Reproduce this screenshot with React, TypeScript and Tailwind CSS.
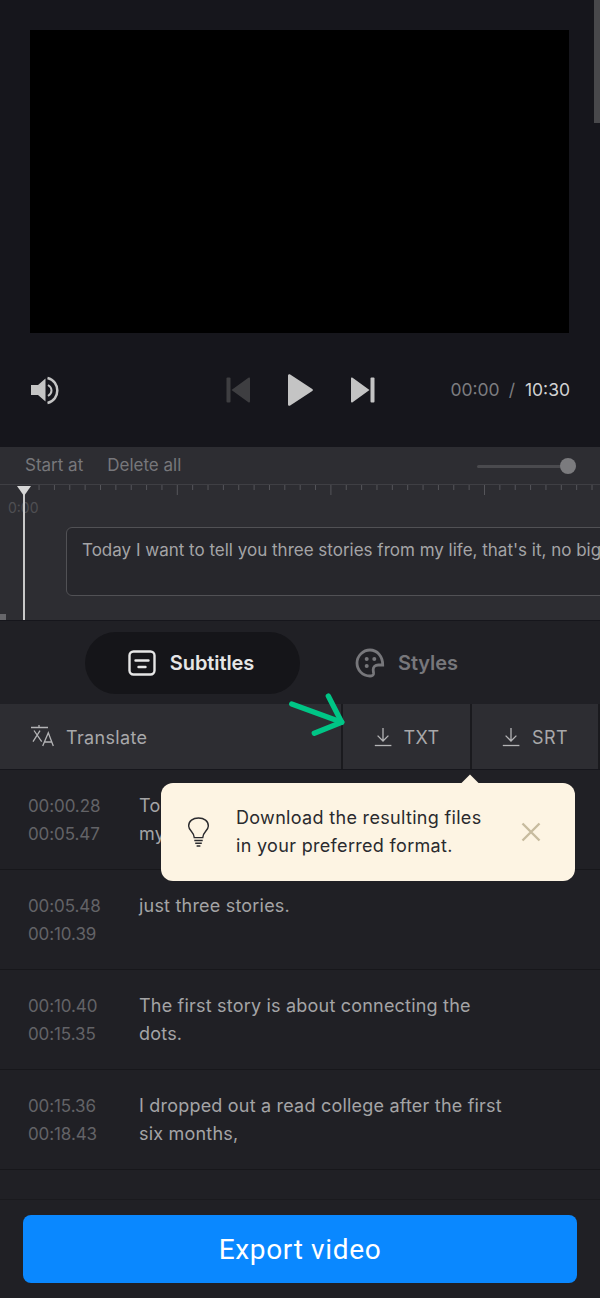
import React from 'react';

const rows = [
  { from: '00:00.28', to: '00:05.47', text: ['Today I want to tell you three stories from', 'my life, that\'s it, no big deal,'] },
  { from: '00:05.48', to: '00:10.39', text: ['just three stories.'] },
  { from: '00:10.40', to: '00:15.35', text: ['The first story is about connecting the', 'dots.'] },
  { from: '00:15.36', to: '00:18.43', text: ['I dropped out a read college after the first', 'six months,'] },
];

function Ruler() {
  const ticks = [];
  for (let i = 1; i < 38; i++) {
    const x = 23.7 + i * 15.36;
    ticks.push(<line key={i} x1={x} x2={x} y1={0} y2={i % 10 === 0 ? 10 : 5} stroke="#55555a" strokeWidth="1" />);
  }
  return (
    <svg width="600" height="12" className="block">
      {ticks}
    </svg>
  );
}

function DownloadIcon() {
  return (
    <svg width="18" height="20" viewBox="0 0 18 20" fill="none" stroke="#b4b4b6" strokeWidth="1.3">
      <path d="M9 1v12.5M3.6 8.6 9 14l5.4-5.4" />
      <path d="M.8 18.5h16.6" />
    </svg>
  );
}

export default function App() {
  return (
    <div className="relative w-[600px] h-[1298px] overflow-hidden bg-[#202025] font-['Inter',sans-serif]">
      {/* scrollbar */}
      <div className="absolute right-0 top-0 w-[6px] h-[123px] bg-[#48484b]" />

      {/* player */}
      <div className="h-[447px] bg-[#16161c] px-[30px] pt-[30px]">
        <div className="w-[539px] h-[303px] bg-black" />
        <div className="flex items-center h-[114px]">
          <svg width="30" height="30" viewBox="0 0 30 30">
            <path d="M1 10h7l7.500-6.500v23L8 20H1z" fill="#c4c4c4" />
            <path d="M18 10c2.500 1.500 3.500 3.500 3.500 5.500s-1 4-3.500 5.500" fill="none" stroke="#c4c4c4" strokeWidth="2" />
            <path d="M17.500 3C24 4.500 27.300 10 27.300 15.500S24 26.500 17.500 28" fill="none" stroke="#c4c4c4" strokeWidth="2.500" />
          </svg>
          <div className="flex items-center ml-[166px] gap-[38px]">
            <svg width="24" height="26" viewBox="0 0 24 26">
              <rect x="0.500" y="0.500" width="4" height="25" rx="1" fill="#3e3e41" />
              <path d="M24 1.500v23a1 1 0 0 1-1.600.8L5.500 13 22.400.7A1 1 0 0 1 24 1.500z" fill="#3e3e41" />
            </svg>
            <svg width="25" height="32" viewBox="0 0 25 32">
              <path d="M0 1.600v28.800c0 1.200 1.200 1.800 2.200 1.100L24.300 17c.8-.5.8-1.500 0-2L2.200.5C1.200-.2 0 .4 0 1.600z" fill="#c4c4c4" />
            </svg>
            <svg width="24" height="26" viewBox="0 0 24 26">
              <rect x="19.500" y="0.500" width="4" height="25" rx="1" fill="#c4c4c4" />
              <path d="M0 1.500v23a1 1 0 0 0 1.600.8L18.500 13 1.600.7A1 1 0 0 0 0 1.500z" fill="#c4c4c4" />
            </svg>
          </div>
          <div className="ml-auto flex items-center text-[17.500px] pt-[1px]">
            <span className="text-[#7d7d80]">00:00</span>
            <span className="text-[#7d7d80] ml-[9px] mr-[10px]">/</span>
            <span className="text-[#d2d2d3]">10:30</span>
          </div>
        </div>
      </div>

      {/* timeline */}
      <div className="relative h-[174px] bg-[#2d2d32] border-b border-[#16161c]">
        <div className="flex items-center h-[38px] pl-[25px] pr-[24px] pt-[1px] border-b border-[#3f3f44] text-[17px] text-[#77777b]">
          <span>Start at</span>
          <span className="ml-[24px]">Delete all</span>
          <div className="ml-auto relative flex items-center w-[99px]">
            <div className="w-full h-[3px] rounded-full bg-[#4a4a4e]" />
            <div className="absolute right-0 w-[16px] h-[16px] rounded-full bg-[#7b7b7e]" />
          </div>
        </div>
        <Ruler />
        <div className="pl-[8px] text-[14px] leading-[20px] text-[#4f4f53] mt-[1px]">0:00</div>
        <div className="ml-[66px] mt-[9px] h-[69px] w-[600px] rounded-[6px] border border-[#515155] bg-[#27272c] px-[15px] pt-[10px] text-[17px] leading-[24px] text-[#a4a4a6] whitespace-nowrap">
          Today I want to tell you three stories from my life, that's it, no big
        </div>
        <div className="absolute left-[23px] top-[39px] bottom-0 w-[2px] bg-[#c8c8c8]" />
        <div className="absolute left-[17px] top-[39px] w-0 h-0 border-l-[7px] border-r-[7px] border-t-[10px] border-l-transparent border-r-transparent border-t-[#d6d6d6]" />
        <div className="absolute left-0 bottom-0 w-[6px] h-[6px] bg-[#66666a]" />
      </div>

      {/* tabs */}
      <div className="flex h-[83px] pt-[11px] pl-[85px]">
        <div className="flex items-center justify-center gap-[14px] w-[215px] h-[62px] pr-[3px] rounded-full bg-[#151519] text-[20px] tracking-[-0.1px] font-semibold text-[#e6e6e6]">
          <svg width="28" height="28" viewBox="0 0 28 28" fill="none" stroke="#e6e6e6" strokeWidth="2.400" strokeLinecap="round">
            <rect x="1.500" y="2.500" width="25" height="23" rx="4" />
            <path d="M7.500 11.500h13M10.500 18h7" />
          </svg>
          <span>Subtitles</span>
        </div>
        <div className="flex items-center gap-[13px] ml-[55px] h-[62px] text-[20px] font-semibold text-[#77777b]">
          <svg width="30" height="30" viewBox="0 0 30 30" fill="none" stroke="#77777b" strokeWidth="2.800">
            <path d="M27.700 17h-4.500c-3 0-5 2-5 4.500 0 2 .5 3 .3 4.500-.3 1.500-2 2-3.500 2C7.500 28 2 22 2 15S8 2 15 2s12.700 6 12.700 15z" />
            <circle cx="11.700" cy="11" r="2" fill="#77777b" stroke="none" />
            <circle cx="19.300" cy="11" r="2" fill="#77777b" stroke="none" />
            <circle cx="11.700" cy="18" r="2" fill="#77777b" stroke="none" />
          </svg>
          <span className="tracking-[-0.1px]">Styles</span>
        </div>
      </div>

      {/* actions */}
      <div className="flex h-[66px] bg-[#2d2d32] border-b border-[#16161c] text-[18px] tracking-[0.35px] text-[#a8a8aa]">
        <div className="flex items-center w-[343px] pl-[30px] gap-[12px] border-r-2 border-[#1a1a1e]">
          <svg width="24" height="24" viewBox="0 0 24 24" fill="none" stroke="#b4b4b6" strokeWidth="1.300">
            <path d="M1 2.500h17M9 0v2.500M4 5.500l7.700 11.200M10 5.700 3 16.700" />
            <path d="M12.700 21 18.300 7.700 23.300 21M14.500 17H22" />
          </svg>
          <span className="pt-[1px]">Translate</span>
        </div>
        <div className="flex items-center justify-center w-[129px] gap-[12px] border-r-2 border-[#1a1a1e]">
          <DownloadIcon />
          <span className="pt-[1px]">TXT</span>
        </div>
        <div className="flex items-center justify-center w-[128px] gap-[12px] border-r-2 border-[#1a1a1e]">
          <DownloadIcon />
          <span className="pt-[1px]">SRT</span>
        </div>
      </div>

      {/* subtitle rows */}
      <div>
        {rows.map((r) => (
          <div key={r.from} className="flex h-[100px] pl-[28px] pt-[22px] border-b border-[#17171b] leading-[28px]">
            <div className="w-[111px] text-[17px] tracking-[-0.1px] text-[#636367]">
              <div>{r.from}</div>
              <div>{r.to}</div>
            </div>
            <div className="text-[18px] tracking-[0.2px] text-[#a4a4a6] whitespace-nowrap">
              {r.text.map((t) => (
                <div key={t}>{t}</div>
              ))}
            </div>
          </div>
        ))}
      </div>

      {/* footer */}
      <div className="absolute left-0 right-0 bottom-0 h-[99px] bg-[#202025] border-t border-[#1a1a1e] px-[23px] pt-[15px]">
        <div className="flex items-center justify-center h-[68px] pt-[2px] rounded-[8px] bg-[#0a88ff] text-white text-[28px] tracking-[0.65px] font-['Roboto',sans-serif]">
          Export video
        </div>
      </div>

      {/* tooltip */}
      <div className="absolute left-[161px] top-[783px] w-[414px] h-[98px] rounded-[12px] bg-[#fdf4e3] flex items-center pl-[26px] text-[18px] tracking-[0.32px] leading-[28px] text-[#2a2a2e]">
        <div className="absolute left-[303px] top-[-6px] w-[12px] h-[12px] rotate-45 bg-[#fdf4e3]" />
        <svg width="23" height="30" viewBox="0 0 24 32" fill="none" stroke="#2a2a2e" strokeWidth="1.500">
          <path d="M7.500 22c0-3-1-4.200-3-6.500C2.800 13.500 1.500 11.500 1.500 9.500c0-5 4.500-8.500 10.500-8.500S22.500 4.500 22.500 9.500c0 2-1.300 4-3 6-2 2.300-3 3.500-3 6.500z" />
          <path d="M7.500 25h9M8.500 28h7M10 31h4" />
        </svg>
        <div className="ml-[26px] whitespace-nowrap">
          <div>Download the resulting files</div>
          <div>in your preferred format.</div>
        </div>
        <svg width="20" height="20" viewBox="0 0 20 20" className="absolute left-[360px] top-[39px]" fill="none" stroke="#c7bb9f" strokeWidth="2.400">
          <path d="M1.500 1.500l17 17M18.500 1.500l-17 17" />
        </svg>
      </div>

      {/* green arrow */}
      <svg width="60" height="50" viewBox="0 0 60 50" className="absolute left-[288px] top-[690px]" fill="none" stroke="#00c586" strokeWidth="5.300" strokeLinecap="round" strokeLinejoin="round">
        <path d="M3.700 14 53.700 32.300" />
        <path d="M40.300 6 53.700 32.300 26.300 43.300" />
      </svg>
    </div>
  );
}
